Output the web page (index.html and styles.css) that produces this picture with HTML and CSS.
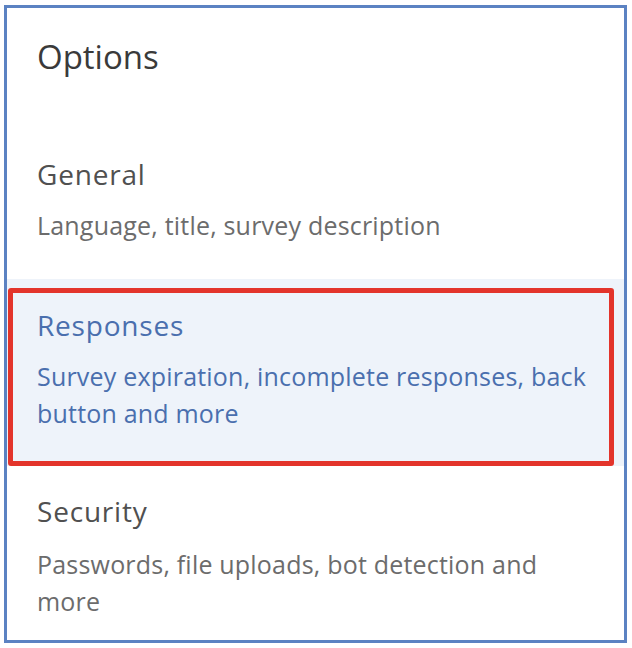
FILE: index.html
```html
<!DOCTYPE html>
<html>
<head>
<meta charset="utf-8">
<link rel="stylesheet" href="styles.css">
</head>
<body>
<div class="panel">
  <h1 class="title">Options</h1>
  <div class="item general">
    <div class="item-title">General</div>
    <div class="item-desc">Language, title, survey description</div>
  </div>
  <div class="item selected">
    <div class="highlight">
      <div class="item-title">Responses</div>
      <div class="item-desc">Survey expiration, incomplete responses, back button and more</div>
    </div>
  </div>
  <div class="item security">
    <div class="item-title">Security</div>
    <div class="item-desc">Passwords, file uploads, bot detection and more</div>
  </div>
</div>
</body>
</html>
```
FILE: styles.css
```css
html, body {
  margin: 0;
  padding: 0;
  background: #ffffff;
}
body {
  font-family: "Open Sans", "Noto Sans", sans-serif;
}
.panel {
  margin: 5px 5px 5px 4px;
  border: 3px solid #5b82c2;
  box-sizing: border-box;
  height: 638px;
  overflow: hidden;
}
.title {
  margin: 0;
  padding: 27px 0 0 30px;
  font-size: 33px;
  font-weight: 400;
  line-height: 44px;
  color: #3a3a3a;
}
.item {
  padding-left: 30px;
}
.item-title {
  font-size: 28px;
  letter-spacing: 0.8px;
  line-height: 36px;
  color: #505050;
}
.item-desc {
  margin-top: 15px;
  font-size: 25px;
  letter-spacing: 0.2px;
  line-height: 37px;
  color: #6c6c6c;
}
.general {
  padding-top: 77px;
  padding-bottom: 35px;
}
.selected {
  padding: 9px 0 0 1px;
  background: #eef3fa;
}
.highlight {
  border: 5px solid #e3342b;
  border-radius: 3px;
  margin-right: 10px;
  padding: 14px 0 29px 24px;
}
.selected .item-title,
.selected .item-desc {
  color: #4a6fae;
}
.security {
  padding-top: 27px;
}
.security .item-desc {
  margin-top: 17px;
  max-width: 530px;
}
```
